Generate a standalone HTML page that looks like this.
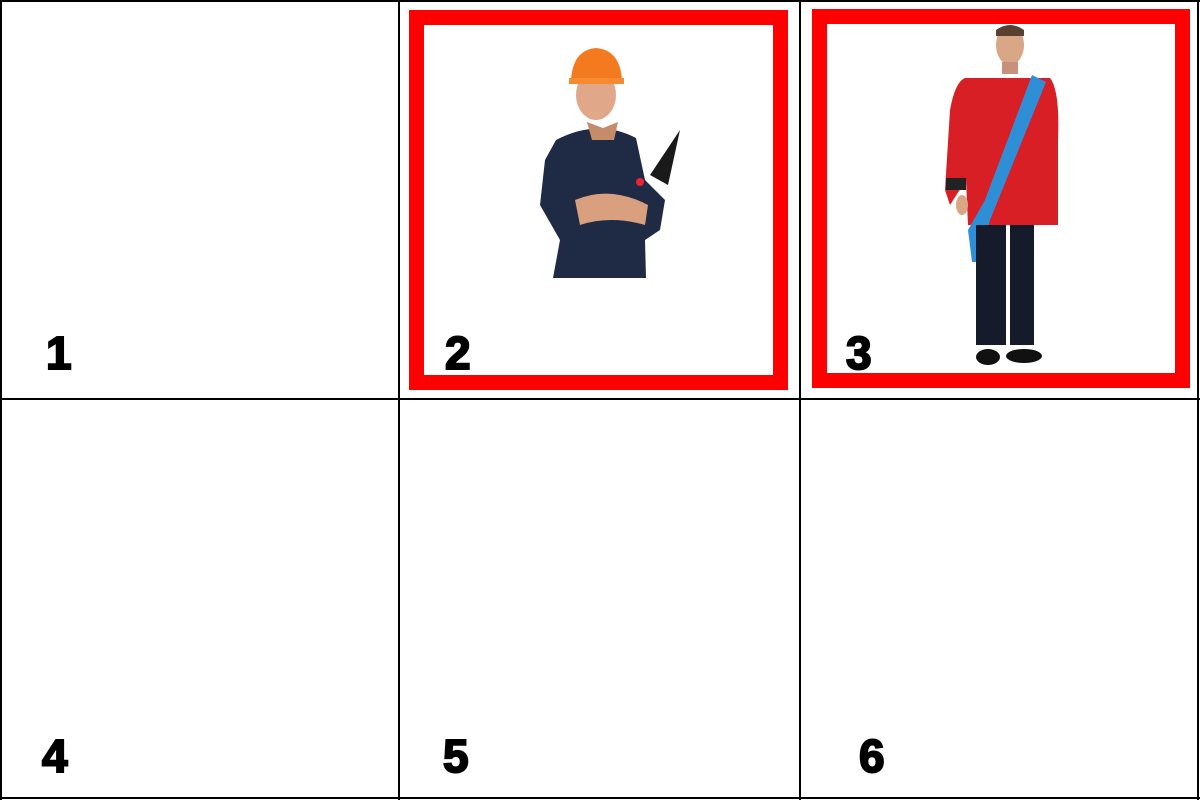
<!DOCTYPE html>
<html><head><style>
body{margin:0;width:1200px;height:800px;background:#fff;position:relative;overflow:hidden;font-family:"Liberation Sans",Arial,sans-serif}
.l{position:absolute;background:#000}
.n{position:absolute;font-weight:bold;font-size:46px;line-height:1;color:#000;-webkit-text-stroke:2px #000}
.r{position:absolute;border:15px solid #f00;box-sizing:border-box;background:#fff}
</style></head><body>
<div class="l" style="left:0;top:0;width:1200px;height:2px"></div>
<div class="l" style="left:0;top:398px;width:1200px;height:2px"></div>
<div class="l" style="left:0;top:797px;width:1200px;height:2px"></div>
<div class="l" style="left:0;top:0;width:2px;height:800px"></div>
<div class="l" style="left:398px;top:0;width:2px;height:800px"></div>
<div class="l" style="left:799px;top:0;width:2px;height:800px"></div>
<div class="l" style="left:1197px;top:0;width:2px;height:800px"></div>
<div class="r" style="left:409px;top:10px;width:379px;height:380px"></div>
<div class="r" style="left:812px;top:9px;width:378px;height:379px"></div>
<svg style="position:absolute;left:0;top:0" width="1200" height="800">
<rect x="620" y="158" width="6" height="30" fill="#333" transform="rotate(35 623 173)"/>
<polygon points="650,175 680,130 668,185" fill="#1a1a1a"/>
<path d="M556,140 Q598,118 636,138 L645,180 L665,200 L660,230 L645,240 L646,278 L553,278 L560,240 L540,205 L545,160 Z" fill="#1f2a44"/>
<path d="M575,200 Q610,185 648,205 L645,225 Q610,215 580,225 Z" fill="#d9a07f"/>
<path d="M587,122 L603,128 L618,122 L614,140 L592,140 Z" fill="#c58c6a"/>
<ellipse cx="596" cy="95" rx="20" ry="25" fill="#e0a888"/>
<path d="M571,82 Q572,50 596,48 Q621,50 622,82 Z" fill="#f47a1f"/>
<rect x="569" y="78" width="55" height="6" fill="#f58a30"/>
<circle cx="640" cy="182" r="4" fill="#e23"/>
<ellipse cx="1010" cy="45" rx="14" ry="20" fill="#d9a686"/>
<path d="M996,30 Q1010,20 1024,30 L1024,36 L996,36 Z" fill="#5a4030"/>
<rect x="1002" y="62" width="16" height="12" fill="#c9917a"/>
<path d="M965,78 L1050,78 Q1060,90 1058,140 L1058,225 L968,225 L966,180 L950,205 L945,190 L950,110 Q955,82 965,78 Z" fill="#d91f26"/>
<path d="M1032,75 L1046,82 L990,220 L980,262 L972,262 L968,230 L985,200 Z" fill="#2f8fd6"/>
<rect x="976" y="225" width="58" height="120" fill="#161b2c"/>
<rect x="1006" y="225" width="4" height="120" fill="#fff"/>
<ellipse cx="988" cy="357" rx="12" ry="8" fill="#111"/>
<ellipse cx="1024" cy="356" rx="18" ry="7" fill="#111"/>
<rect x="946" y="178" width="20" height="12" fill="#222"/>
<ellipse cx="962" cy="205" rx="6" ry="10" fill="#d9a686"/>
</svg>
<div class="n" style="left:46px;top:330px">1</div>
<div class="n" style="left:445px;top:330px">2</div>
<div class="n" style="left:846px;top:330px">3</div>
<div class="n" style="left:42px;top:733px">4</div>
<div class="n" style="left:443px;top:733px">5</div>
<div class="n" style="left:859px;top:733px">6</div>
</body></html>
